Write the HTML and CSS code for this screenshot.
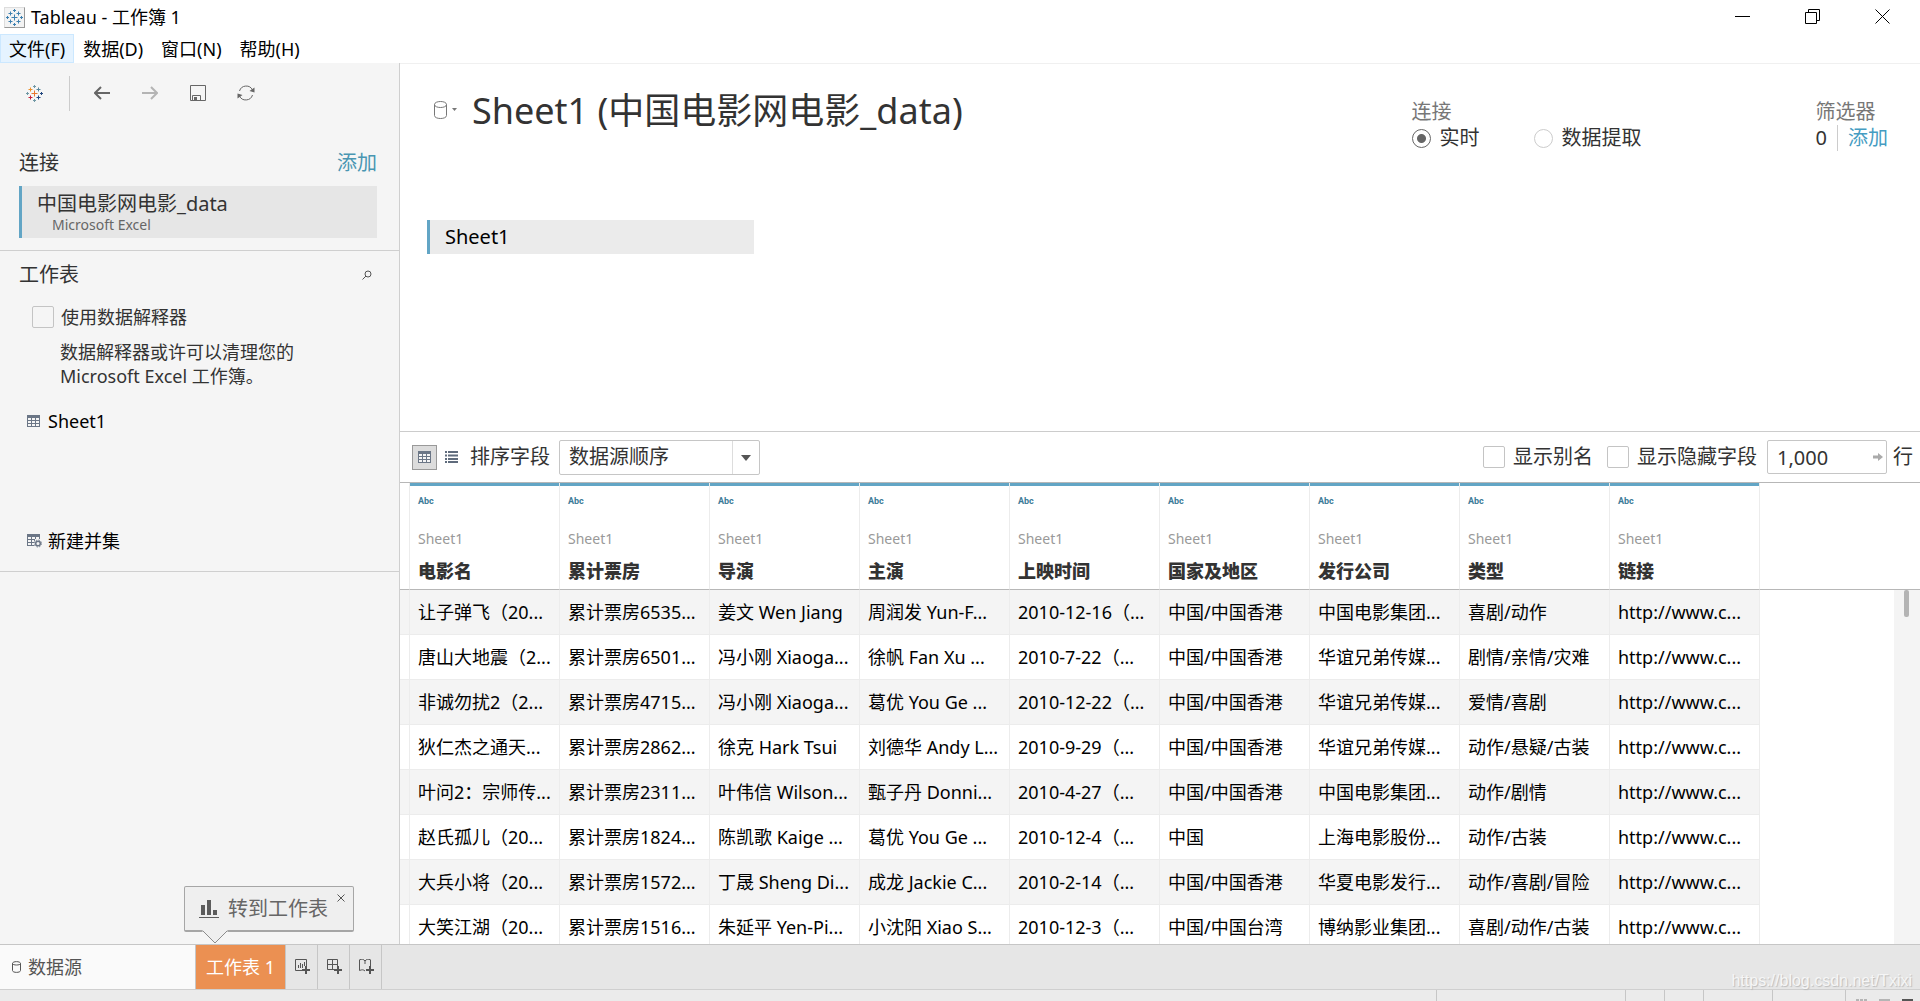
FILE: index.html
```html
<!DOCTYPE html>
<html lang="zh-CN">
<head>
<meta charset="utf-8">
<title>Tableau - 工作簿 1</title>
<link rel="stylesheet" href="styles.css">
</head>
<body>
<svg class="defs" width="0" height="0" aria-hidden="true">
  <symbol id="sparkle" viewBox="0 0 17 17">
    <path class="s1" d="M8.500 5.500v6M5.500 8.500h6"/>
    <path class="s2" d="M4.500 2.500v4M2.500 4.500h4"/>
    <path class="s3" d="M12.500 2.500v4M10.500 4.500h4"/>
    <path class="s4" d="M4.500 10.500v4M2.500 12.500h4"/>
    <path class="s5" d="M12.500 10.500v4M10.500 12.500h4"/>
    <path class="s6" d="M8.500 0v3M7 1.500h3M8.500 14v3M7 15.500h3M1.500 7v3M0 8.500h3"/>
    <path class="s5" d="M15.500 7v3M14 8.500h3"/>
  </symbol>
  <symbol id="grid" viewBox="0 0 13 12">
    <path d="M0 0h13v12H0z" fill="#6b7686"/>
    <path d="M1 3h3v2H1zM5 3h3v2H5zM9 3h3v2H9zM1 6h3v2H1zM5 6h3v2H5zM9 6h3v2H9zM1 9h3v2H1zM5 9h3v2H5zM9 9h3v2H9z" fill="#f5f5f5"/>
  </symbol>
</svg>

<header class="titlebar">
  <span class="app-icon"><svg class="blue-mark" width="17" height="17"><use href="#sparkle"/></svg></span>
  <span class="app-title">Tableau - 工作簿 1</span>
  <button class="win" aria-label="最小化"><svg width="16" height="16" viewBox="0 0 16 16"><path d="M0 7.500h15"/></svg></button>
  <button class="win" aria-label="还原"><svg width="16" height="16" viewBox="0 0 16 16"><path d="M.5 3.500h11v11H.5zM3.500 3.500v-3h11v11h-3"/></svg></button>
  <button class="win" aria-label="关闭"><svg width="16" height="16" viewBox="0 0 16 16"><path d="M.5.5l14 14M14.500.5l-14 14"/></svg></button>
</header>

<nav class="menubar">
  <button class="menu active">文件(F)</button>
  <button class="menu">数据(D)</button>
  <button class="menu">窗口(N)</button>
  <button class="menu">帮助(H)</button>
</nav>

<div class="workspace">
  <aside class="sidebar">
    <div class="toolbar">
      <button class="tool home" aria-label="开始页面"><svg class="color-mark" width="17" height="17"><use href="#sparkle"/></svg></button>
      <button class="tool" aria-label="后退"><svg width="16" height="14" viewBox="0 0 16 14" fill="none" stroke="#666" stroke-width="2"><path d="M1 7h15M7 1L1 7l6 6"/></svg></button>
      <button class="tool" aria-label="前进"><svg width="16" height="14" viewBox="0 0 16 14" fill="none" stroke="#b4b4b4" stroke-width="2"><path d="M0 7h15M9 1l6 6-6 6"/></svg></button>
      <button class="tool" aria-label="保存"><svg width="16" height="16" viewBox="0 0 16 16" fill="none" stroke="#666"><path d="M.5.500h15v15H.5zM2.500 15.500v-5h8v5"/><path d="M4 12h3v3H4z" fill="#666" stroke="none"/></svg></button>
      <button class="tool" aria-label="刷新"><svg width="18" height="16" viewBox="0 0 18 16" fill="none" stroke="#666"><path d="M2.500 6A7 7 0 0 1 15.500 5M15.500 10A7 7 0 0 1 2.500 11"/><path d="M17.500 2.500v5l-5-1.500zM.5 13.500v-5l5 1.500z" fill="#666" stroke="none"/></svg></button>
    </div>

    <section class="connections">
      <div class="head"><h2>连接</h2><a href="#">添加</a></div>
      <div class="connection">
        <span>中国电影网电影_data</span>
        <small>Microsoft Excel</small>
      </div>
    </section>

    <section class="sheets">
      <div class="head">
        <h2>工作表</h2>
        <button class="search" aria-label="搜索"><svg width="10" height="10" viewBox="0 0 10 10" fill="none" stroke="#555"><circle cx="6" cy="4" r="3"/><path d="M4 6L.5 9.500"/></svg></button>
      </div>
      <label class="interpreter"><input type="checkbox" class="box">使用数据解释器</label>
      <p class="hint">数据解释器或许可以清理您的<br>Microsoft Excel 工作簿。</p>
      <button class="sheet"><svg width="13" height="12"><use href="#grid"/></svg>Sheet1</button>
      <button class="sheet union"><svg width="15" height="14" viewBox="0 0 15 14"><path d="M0 0h13v5H8v7H0z" fill="#6b7686"/><path d="M1 3h3v2H1zM5 3h3v2H5zM9 3h3v2H9zM1 6h3v2H1zM5 6h2v2H5zM1 9h3v2H1zM5 9h2v2H5z" fill="#f5f5f5"/><circle cx="11" cy="9.500" r="4" fill="#f5f5f5"/><circle cx="11" cy="9.500" r="3.500" fill="none" stroke="#6b7686" stroke-dasharray="1.400 1.350"/><circle cx="11" cy="9.500" r="2.300" fill="none" stroke="#6b7686" stroke-width="1.500"/></svg>新建并集</button>
    </section>
  </aside>

  <main class="main">
    <section class="canvas">
      <div class="source">
        <button class="db" aria-label="数据源菜单"><svg width="24" height="18" viewBox="0 0 24 18"><path d="M.5 3.500v11c0 4 12 4 12 0v-11M.5 3.500c0-4 12-4 12 0s-12 4-12 0z" fill="none" stroke="#777"/><path d="M18 7h5l-2.500 3z" fill="#777"/></svg></button>
        <h1>Sheet1 (中国电影网电影_data)</h1>
        <fieldset class="mode">
          <legend>连接</legend>
          <div class="radios">
            <label><input type="radio" name="mode" checked>实时</label>
            <label><input type="radio" name="mode">数据提取</label>
          </div>
        </fieldset>
        <div class="filters">
          <div>筛选器</div>
          <div class="filter-row"><span>0</span><a href="#">添加</a></div>
        </div>
      </div>
      <div class="pill">Sheet1</div>
    </section>

    <section class="gridbar">
      <button class="view on" aria-label="网格视图"><svg width="13" height="12"><use href="#grid"/></svg></button>
      <button class="view" aria-label="列表视图"><svg width="13" height="12" viewBox="0 0 13 12"><path d="M0 1h2M3 1h10M0 4.500h2M3 4.500h10M0 8h2M3 8h10M0 11h2M3 11h10" stroke="#5f6b7c" stroke-width="2"/></svg></button>
      <label for="sort">排序字段</label>
      <span class="select">
        <select id="sort"><option>数据源顺序</option></select>
        <svg width="10" height="6" viewBox="0 0 10 6"><path d="M0 0h10L5 6z" fill="#555"/></svg>
      </span>
      <div class="options">
        <label><input type="checkbox" class="box">显示别名</label>
        <label><input type="checkbox" class="box">显示隐藏字段</label>
        <span class="rows">
          <input id="rows" type="text" value="1,000">
          <svg width="10" height="8" viewBox="0 0 10 8"><path d="M0 2.500h5V0l5 4-5 4V5.500H0z" fill="#aaa"/></svg>
        </span>
        <label for="rows" class="unit">行</label>
      </div>
    </section>

    <div class="data">
      <table>
        <colgroup><col class="c-edge"><col span="9" class="c-field"><col><col class="c-bar"></colgroup>
        <thead>
          <tr>
            <th class="edge"></th>
            <th><i>Abc</i><small>Sheet1</small><b>电影名</b></th>
            <th><i>Abc</i><small>Sheet1</small><b>累计票房</b></th>
            <th><i>Abc</i><small>Sheet1</small><b>导演</b></th>
            <th><i>Abc</i><small>Sheet1</small><b>主演</b></th>
            <th><i>Abc</i><small>Sheet1</small><b>上映时间</b></th>
            <th><i>Abc</i><small>Sheet1</small><b>国家及地区</b></th>
            <th><i>Abc</i><small>Sheet1</small><b>发行公司</b></th>
            <th><i>Abc</i><small>Sheet1</small><b>类型</b></th>
            <th><i>Abc</i><small>Sheet1</small><b>链接</b></th>
            <th class="rest" colspan="2"></th>
          </tr>
        </thead>
        <tbody>
          <tr><td></td><td>让子弹飞（20...</td><td>累计票房6535...</td><td>姜文 Wen Jiang</td><td>周润发 Yun-F...</td><td>2010-12-16（...</td><td>中国/中国香港</td><td>中国电影集团...</td><td>喜剧/动作</td><td>http://www.c...</td><td class="rest"></td><td class="bar"></td></tr>
          <tr><td></td><td>唐山大地震（2...</td><td>累计票房6501...</td><td>冯小刚 Xiaoga...</td><td>徐帆 Fan Xu ...</td><td>2010-7-22（...</td><td>中国/中国香港</td><td>华谊兄弟传媒...</td><td>剧情/亲情/灾难</td><td>http://www.c...</td><td class="rest"></td><td class="bar"></td></tr>
          <tr><td></td><td>非诚勿扰2（2...</td><td>累计票房4715...</td><td>冯小刚 Xiaoga...</td><td>葛优 You Ge ...</td><td>2010-12-22（...</td><td>中国/中国香港</td><td>华谊兄弟传媒...</td><td>爱情/喜剧</td><td>http://www.c...</td><td class="rest"></td><td class="bar"></td></tr>
          <tr><td></td><td>狄仁杰之通天...</td><td>累计票房2862...</td><td>徐克 Hark Tsui</td><td>刘德华 Andy L...</td><td>2010-9-29（...</td><td>中国/中国香港</td><td>华谊兄弟传媒...</td><td>动作/悬疑/古装</td><td>http://www.c...</td><td class="rest"></td><td class="bar"></td></tr>
          <tr><td></td><td>叶问2：宗师传...</td><td>累计票房2311...</td><td>叶伟信 Wilson...</td><td>甄子丹 Donni...</td><td>2010-4-27（...</td><td>中国/中国香港</td><td>中国电影集团...</td><td>动作/剧情</td><td>http://www.c...</td><td class="rest"></td><td class="bar"></td></tr>
          <tr><td></td><td>赵氏孤儿（20...</td><td>累计票房1824...</td><td>陈凯歌 Kaige ...</td><td>葛优 You Ge ...</td><td>2010-12-4（...</td><td>中国</td><td>上海电影股份...</td><td>动作/古装</td><td>http://www.c...</td><td class="rest"></td><td class="bar"></td></tr>
          <tr><td></td><td>大兵小将（20...</td><td>累计票房1572...</td><td>丁晟 Sheng Di...</td><td>成龙 Jackie C...</td><td>2010-2-14（...</td><td>中国/中国香港</td><td>华夏电影发行...</td><td>动作/喜剧/冒险</td><td>http://www.c...</td><td class="rest"></td><td class="bar"></td></tr>
          <tr><td></td><td>大笑江湖（20...</td><td>累计票房1516...</td><td>朱延平 Yen-Pi...</td><td>小沈阳 Xiao S...</td><td>2010-12-3（...</td><td>中国/中国台湾</td><td>博纳影业集团...</td><td>喜剧/动作/古装</td><td>http://www.c...</td><td class="rest"></td><td class="bar"></td></tr>
        </tbody>
      </table>
      <span class="thumb"></span>
    </div>
  </main>
</div>

<footer class="tabs">
  <button class="tab source-tab"><svg width="9" height="12" viewBox="0 0 9 12" fill="none" stroke="#555"><path d="M.5 2.500v7c0 2.500 8 2.500 8 0v-7C8.500 0 .5 0 .5 2.500zm0 0c0 2 8 2 8 0"/></svg>数据源</button>
  <button class="tab sheet-tab">工作表 1</button>
  <button class="tab add" aria-label="新建工作表"><svg width="16" height="16" viewBox="0 0 16 16" fill="none" stroke="#555"><path d="M7 11.500H.5V.5h11V7M3.500 9V6M5.500 9V4M7.500 9V5M9.500 7V3"/><path d="M7 11h8M11 7v8" stroke-width="2"/></svg></button>
  <button class="tab add" aria-label="新建仪表板"><svg width="16" height="16" viewBox="0 0 16 16" fill="none" stroke="#555"><path d="M7 10.500H.5V.5h10V7M5.500.5v10M.5 5.500h10"/><path d="M7 11h8M11 7v8" stroke-width="2"/></svg></button>
  <button class="tab add" aria-label="新建故事"><svg width="16" height="16" viewBox="0 0 16 16" fill="none" stroke="#555"><path d="M6 12C4.500 10.500 3 10.500.5 11.500V.8C3 0 4.500 0 6 2c1.500-2 3-2 5.500-1.200V7M6 2v3"/><path d="M7 11h8M11 7v8" stroke-width="2"/></svg></button>
  <span class="watermark">https://blog.csdn.net/Txixi</span>
  <div class="callout">
    <svg width="20" height="18" viewBox="0 0 20 18"><path d="M2 5h4v10H2zM8 0h4v15H8zM14 10h4v5h-4zM0 17h20v1H0z" fill="#5d5d5d"/></svg>
    <span>转到工作表</span>
    <button class="dismiss" aria-label="关闭提示"><svg width="8" height="8" viewBox="0 0 8 8"><path d="M.5.5l7 7M7.500.5l-7 7" stroke="#555"/></svg></button>
    <svg class="tip" width="26" height="14" viewBox="0 0 26 14"><path d="M0 0v1l13 12L26 1V0z" fill="#efefef"/><path d="M.5.5L13 13 25.500.5" fill="none" stroke="#8c8c8c"/></svg>
  </div>
</footer>
<div class="status">
  <span class="cell w189"></span><span class="cell w39"></span><span class="cell w39"></span><span class="cell w69"></span><span class="cell w73"></span>
  <span class="cell views"><i class="dots"></i><i></i><i class="dark"></i></span>
</div>
</body>
</html>
```
FILE: styles.css
```css
* { box-sizing: border-box; }
body {
  margin: 0;
  height: 100vh;
  display: flex;
  flex-direction: column;
  overflow: hidden;
  background: #fff;
  color: #333;
  font: 18px/24px "Noto Sans", "Noto Sans CJK SC", sans-serif;
}
button, input, select { font: inherit; color: inherit; margin: 0; }
button { background: none; border: 0; padding: 0; }
a { color: #4996b2; text-decoration: none; }
h1, h2, p { margin: 0; font-weight: 400; }
h2 { font-size: 20px; line-height: 28px; }
svg { display: block; flex: none; }
.defs { position: absolute; }

/* Window frame */
.titlebar { flex: none; height: 34px; display: flex; align-items: center; padding: 0 2px 0 4px; color: #000; }
.app-icon { width: 21px; height: 21px; display: grid; place-items: center; background: #f3f3f3; border: 1px solid #ddd; border-right-color: #999; border-bottom-color: #999; margin-right: 6px; }
.app-title { flex: 1; }
.blue-mark { stroke: #3d80b0; }
.win { width: 70px; height: 34px; display: grid; place-items: center; }
.win svg { fill: none; stroke: #000; }
.menubar { flex: none; height: 29px; display: flex; color: #000; }
.menu { height: 29px; padding: 0 8px; border: 1px solid transparent; }
.menu.active { background: #e5f3ff; border-color: #cce8ff; }

.workspace { flex: 1; min-height: 0; display: flex; }

/* Left pane */
.sidebar { flex: none; width: 400px; background: #f5f5f5; border-right: 1px solid #cfcfcf; }
.toolbar { height: 60px; display: flex; align-items: center; }
.tool { width: 48px; height: 35px; display: grid; place-items: center; }
.home { width: 70px; border-right: 1px solid #ccc; margin-right: 8px; }
.color-mark { stroke: #e8762d; --a: #eb912c; --b: #59879b; --c: #c72037; --d: #1f457e; --e: #7199a6; }
.s2 { stroke: var(--a, #3d80b0); }
.s3 { stroke: var(--b, #3d80b0); }
.s4 { stroke: var(--c, #3d80b0); }
.s5 { stroke: var(--d, #3d80b0); }
.s6 { stroke: var(--e, #3d80b0); }
.head { display: flex; justify-content: space-between; align-items: center; }
.head a { font-size: 20px; line-height: 28px; }
.connections { padding: 26px 22px 12px 19px; border-bottom: 1px solid #cfcfcf; }
.connection { margin-top: 9px; height: 52px; padding: 4px 0 0 15px; background: #e6e6e6; border-left: 3px solid #62a5c5; font-size: 20px; line-height: 28px; }
.connection span, .connection small { display: block; }
.connection small { padding-left: 15px; color: #666; font-size: 14px; line-height: 14px; }
.sheets { padding: 10px 22px 18px 19px; height: 321px; display: flex; flex-direction: column; border-bottom: 1px solid #cfcfcf; }
.search { width: 20px; height: 22px; display: grid; place-items: center; }
.interpreter { display: flex; align-items: center; gap: 7px; margin: 16px 0 0 13px; }
.box { appearance: none; flex: none; width: 22px; height: 22px; border: 1px solid #c4c4c4; border-radius: 2px; }
.hint { margin: 11px 0 0 41px; }
.sheet { display: flex; align-items: center; gap: 8px; margin: 21px 0 0 8px; color: #000; text-align: left; }
.union { margin-top: auto; gap: 6px; }

/* Canvas */
.main { flex: 1; min-width: 0; display: flex; flex-direction: column; border-top: 1px solid #f0f0f0; }
.canvas { flex: none; height: 367px; padding: 20px 32px 0 27px; }
.source { height: 136px; display: flex; }
.db { width: 24px; height: 52px; margin: 0 14px 0 7px; }
h1 { flex: 1; font-size: 36px; line-height: 54px; white-space: nowrap; }
.mode { border: 0; margin: 0; padding: 0; font-size: 20px; line-height: 26px; width: 404px; }
.mode legend { color: #777; padding: 15px 0 0; }
.radios { display: flex; gap: 54px; }
.radios label { display: flex; align-items: center; gap: 9px; }
.radios input { appearance: none; margin: 0; width: 19px; height: 19px; border: 1px solid #ccc; border-radius: 50%; }
.radios input:checked { border-color: #666; background: radial-gradient(circle, #666 4px, transparent 5px); }
.filters { padding-top: 15px; font-size: 20px; line-height: 26px; color: #777; }
.filter-row { display: flex; gap: 10px; align-items: center; color: #333; }
.filter-row a { border-left: 1px solid #ccc; padding-left: 10px; color: #459cc2; }
.pill { width: 327px; height: 34px; padding-left: 15px; border-left: 3px solid #62a5c5; background: #ebebeb; color: #000; font-size: 20px; line-height: 34px; }

/* Grid controls */
.gridbar { flex: none; height: 52px; border-top: 1px solid #ccc; border-bottom: 1px solid #b7b7b7; padding: 0 7px 0 12px; display: flex; align-items: center; font-size: 20px; line-height: 28px; }
.view { width: 25px; height: 25px; display: grid; place-items: center; border: 1px solid transparent; margin-right: 2px; }
.view.on { background: #dcdcdc; border-color: #999; }
.gridbar > label { margin: 0 9px 0 4px; }
.select { position: relative; width: 201px; height: 35px; }
.select select { appearance: none; width: 100%; height: 100%; padding: 0 9px; border: 1px solid #c6c6c6; border-radius: 2px; background: linear-gradient(#ddd, #ddd) right 26px top / 1px 100% no-repeat #fff; }
.select svg { position: absolute; right: 9px; top: 15px; }
.options { margin-left: auto; display: flex; align-items: center; gap: 14px; }
.options label { display: flex; align-items: center; gap: 8px; }
.rows { position: relative; width: 120px; height: 34px; margin-left: -4px; }
.rows input { width: 100%; height: 100%; padding: 0 9px; border: 1px solid #c6c6c6; border-radius: 2px; }
.rows svg { position: absolute; right: 4px; top: 13px; }
.options .unit { margin-left: -8px; }

/* Data grid */
.data { flex: 1; min-height: 0; position: relative; overflow: hidden; }
table { width: 100%; table-layout: fixed; border-collapse: separate; border-spacing: 0; color: #000; }
.c-edge { width: 10px; }
.c-field { width: 150px; }
.c-bar { width: 26px; }
th { height: 107px; padding: 3px 0 0 8px; text-align: left; vertical-align: top; border-right: 1px solid #ececec; border-bottom: 1px solid #b7b7b7; background: linear-gradient(#62a5c5, #62a5c5) 0 0 / 100% 3px no-repeat; }
th.edge, th.rest { background: none; }
th.rest, td.rest, td.bar { border-right: 0; }
th i, th small, th b { display: block; }
th i { font: bold 9px/12px "Roboto", sans-serif; color: #3c7c98; margin-top: 9px; }
th small { font-size: 14px; font-weight: 400; line-height: 20px; color: #999; margin-top: 22px; }
th b { color: #333; line-height: 24px; margin-top: 10px; }
td { height: 45px; padding: 0 0 0 8px; white-space: nowrap; border-right: 1px solid #ececec; border-bottom: 1px solid #ececec; }
tr:nth-child(odd) td { background: #f4f4f4; }
tr td.rest, tr:nth-child(odd) td.rest { background: #fff; border-bottom: 0; }
tr td.bar { background: #f4f4f4; border-bottom: 0; }
.thumb { position: absolute; right: 11px; top: 107px; width: 5px; height: 27px; border-radius: 2px; background: #b4b4b4; }

/* Bottom tabs and status */
.tabs { flex: none; height: 46px; position: relative; display: flex; background: #e6e6e6; border-top: 1px solid #c6c6c6; border-bottom: 1px solid #cfcfcf; }
.tab { border-right: 1px solid #c6c6c6; display: flex; align-items: center; }
.source-tab { width: 196px; padding-left: 12px; gap: 7px; background: #fafafa; color: #555; }
.sheet-tab { width: 90px; justify-content: center; background: #eb9052; color: #fff; }
.add { width: 32px; padding-left: 9px; }
.watermark { margin: auto 8px 0 auto; font: 16px/16px "Liberation Sans", sans-serif; color: #f6f6f6; text-shadow: 1px 1px 1px #bbb; }
.callout { position: absolute; left: 184px; bottom: 57px; width: 170px; height: 46px; padding-left: 14px; display: flex; align-items: center; gap: 9px; background: #efefef; border: 1px solid #a6a6a6; border-bottom-width: 2px; border-radius: 2px; font-size: 20px; color: #666; }
.dismiss { position: absolute; right: 8px; top: 7px; }
.tip { position: absolute; left: 17px; top: 43px; }
.status { flex: none; height: 11px; display: flex; justify-content: flex-end; background: #ebebeb; }
.cell { border-left: 1px solid #c6c6c6; }
.w189 { width: 189px; }
.w39 { width: 39px; }
.w69 { width: 69px; }
.w73 { width: 73px; }
.views { width: 75px; padding-left: 10px; display: flex; gap: 12px; align-items: flex-end; }
.views i { width: 11px; height: 2px; background: #b5b5b5; }
.views .dots { background: repeating-linear-gradient(90deg, #b5b5b5 0 3px, transparent 3px 4px); }
.views .dark { background: #555; }
```
